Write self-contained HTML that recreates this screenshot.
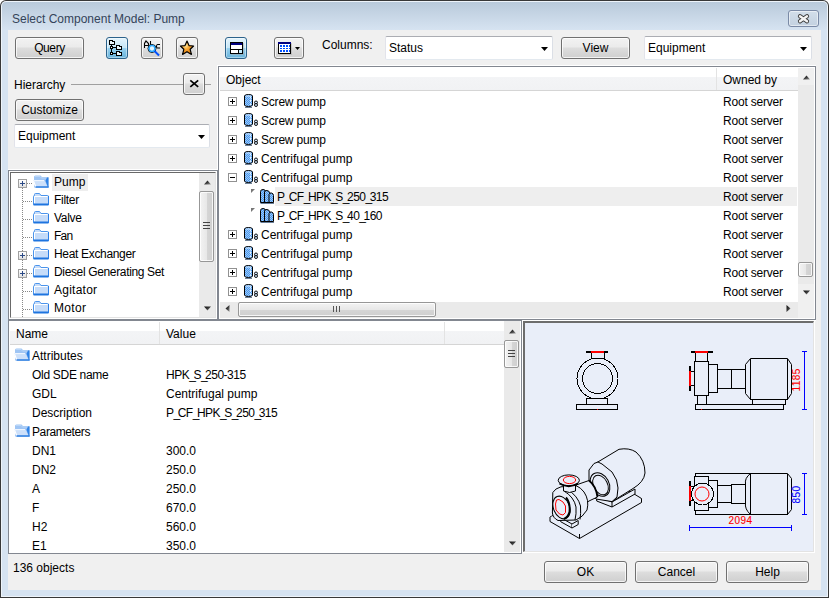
<!DOCTYPE html>
<html><head><meta charset="utf-8">
<style>
*{margin:0;padding:0;box-sizing:border-box}
html,body{width:829px;height:598px;overflow:hidden;background:#fff}
body{position:relative;font-family:"Liberation Sans",sans-serif;font-size:12px;color:#000}
.a{position:absolute}
svg.a{overflow:visible}
.t{position:absolute;white-space:nowrap;line-height:17px}
#win{left:0;top:0;width:829px;height:598px;background:#383838;border-radius:6px 6px 0 0}
#win2{left:1px;top:1px;width:827px;height:596px;background:#eef4fa;border-radius:5px 5px 0 0}
#win3{left:2px;top:2px;width:825px;height:594px;background:linear-gradient(#b9cadb 0px,#d6e3f1 28px,#d6e3f1 100%);border-radius:4px 4px 0 0}
#client{left:8px;top:30px;width:813px;height:560px;background:#f0f0f0}
.btn{position:absolute;border:1px solid #707070;border-radius:3px;background:linear-gradient(#f2f2f2 0%,#ebebeb 45%,#dddddd 50%,#cfcfcf 100%);box-shadow:inset 0 0 0 1px rgba(255,255,255,.75);text-align:center;line-height:21px}
.bsel{position:absolute;border:1px solid #2c628b;border-radius:3px;background:linear-gradient(#e5f4fc 0%,#c4e5f6 50%,#98d1ef 50%,#68b3db 100%);box-shadow:inset 0 0 0 1px rgba(255,255,255,.4)}
.combo{position:absolute;background:#fff;border:1px solid;border-color:#abadb3 #dbdfe6 #e3e9ef #e2e3ea;border-radius:2px}
.arr{position:absolute;width:0;height:0;border-left:4px solid transparent;border-right:4px solid transparent;border-top:4px solid #000}
.thumbv{border:1px solid #979797;border-radius:2px;background:linear-gradient(90deg,#f3f3f3 0%,#e8e8e8 50%,#d6d6d6 51%,#cfcfcf 100%);box-shadow:inset 0 0 0 1px rgba(255,255,255,.8)}
.thumbh{border:1px solid #979797;border-radius:2px;background:linear-gradient(#f3f3f3 0%,#e8e8e8 50%,#d6d6d6 51%,#cfcfcf 100%);box-shadow:inset 0 0 0 1px rgba(255,255,255,.8)}
</style></head><body>
<svg width="0" height="0" style="position:absolute"><defs><linearGradient id="ag" x1="0" y1="0" x2="1" y2="1"><stop offset="0" stop-color="#0a0a0a"/><stop offset="0.5" stop-color="#3a3a3a"/><stop offset="1" stop-color="#9a9a9a"/></linearGradient><pattern id="dith" width="2" height="2" patternUnits="userSpaceOnUse"><rect width="2" height="2" fill="#4a98ee"/><rect width="1" height="1" fill="#9cc8f7"/><rect x="1" y="1" width="1" height="1" fill="#9cc8f7"/></pattern></defs></svg>
<div id="win" class="a"></div>
<div id="win2" class="a"></div>
<div id="win3" class="a"></div>
<div class="t" style="left:12px;top:11px;color:#34445a">Select Component Model: Pump</div>
<div class="a" style="left:788px;top:10px;width:31px;height:17px;border:1px solid #7a8aa6;border-radius:3px;background:linear-gradient(#d2deea,#c3d1e0);box-shadow:inset 0 0 0 1px rgba(255,255,255,.5)"></div>
<svg class="a" style="left:797px;top:14px" width="14" height="12"><path d="M3 2.2L10 7.3M10 2.2L3 7.3" stroke="#3a3a3a" stroke-width="4.2" stroke-linecap="round"/><path d="M3 2.2L10 7.3M10 2.2L3 7.3" stroke="#f4f4f4" stroke-width="2.4" stroke-linecap="round"/></svg>
<div id="client" class="a"></div>

<!-- toolbar -->
<div class="btn" style="left:15px;top:37px;width:69px;height:22px;letter-spacing:-0.4px">Query</div>
<div class="bsel" style="left:106px;top:37px;width:22px;height:22px"></div>
<svg class="a" style="left:106px;top:37px" width="22" height="22" viewBox="0 0 22 22" shape-rendering="crispEdges">
<path d="M3.5 3.5H6L7 4.5H8.5V7.5H3.5Z" fill="#eaf6fd" stroke="#000"/>
<path d="M10.5 8.5H13L14 9.5H15.5V12.5H10.5Z" fill="#eaf6fd" stroke="#000"/>
<path d="M10.5 14.5H13L14 15.5H15.5V18.5H10.5Z" fill="#eaf6fd" stroke="#000"/>
<path d="M5.5 8V16M7 10.5H10.5M7 16.5H10.5" stroke="#000"/>
<rect x="4.5" y="9.5" width="2" height="2" fill="#fff" stroke="#000"/>
<rect x="4.5" y="15.5" width="2" height="2" fill="#fff" stroke="#000"/>
</svg>
<div class="btn" style="left:141px;top:37px;width:22px;height:22px"></div>
<svg class="a" style="left:141px;top:37px" width="22" height="22" viewBox="0 0 22 22">
<path d="M3.5 11V6.5L5 4L7.5 6.5V11M3.5 8.5H7.5M9.5 4V11.5M19 7.5H16.5Q15.5 7.5 15.5 9.5Q15.5 11 16.5 11H19" fill="none" stroke="#000" stroke-width="1.1"/>
<circle cx="11" cy="11.5" r="4" fill="#e6f6ff" stroke="#000" stroke-width="1"/>
<circle cx="11" cy="11.5" r="2.9" fill="none" stroke="#2aa8ff" stroke-width="1.5"/>
<path d="M13.5 14L18 18.5" stroke="#0050ff" stroke-width="2"/>
</svg>
<div class="btn" style="left:176px;top:37px;width:22px;height:22px"></div>
<svg class="a" style="left:176px;top:37px" width="22" height="22" viewBox="0 0 22 22">
<defs><radialGradient id="sg" cx="0.4" cy="0.35" r="0.6"><stop offset="0" stop-color="#ffe9a0"/><stop offset="0.45" stop-color="#f7a531"/><stop offset="1" stop-color="#e07f10"/></radialGradient></defs>
<path d="M11 4L13 8.6L17.6 9L14.2 12.3L15.4 17.4L11 14.7L6.6 17.4L7.8 12.3L4.4 9L9 8.6Z" fill="url(#sg)" stroke="#000" stroke-width="1.2" stroke-linejoin="round"/>
</svg>
<div class="bsel" style="left:225px;top:37px;width:22px;height:22px"></div>
<svg class="a" style="left:225px;top:37px" width="22" height="22" viewBox="0 0 22 22" shape-rendering="crispEdges">
<rect x="6" y="6" width="13" height="12" fill="#a6a6a6" opacity=".5"/>
<rect x="5" y="5" width="13" height="12" fill="#000"/>
<rect x="6" y="6" width="11" height="2" fill="#000080"/>
<rect x="6" y="8" width="11" height="4" fill="#fff"/>
<rect x="6" y="13" width="7" height="3" fill="#fff"/>
<rect x="14" y="13" width="3" height="3" fill="#c4ecff"/>
</svg>
<div class="btn" style="left:274px;top:37px;width:30px;height:22px"></div>
<svg class="a" style="left:274px;top:37px" width="30" height="22" viewBox="0 0 30 22" shape-rendering="crispEdges">
<rect x="5" y="6" width="13" height="12" fill="#a6a6a6" opacity=".5"/>
<rect x="4" y="5" width="13" height="12" fill="#000"/>
<rect x="4" y="5" width="13" height="2" fill="#000080"/>
<rect x="5" y="7" width="11" height="9" fill="#fff"/>
<g fill="#0050ff">
<rect x="6" y="8" width="2" height="2"/><rect x="9" y="8" width="2" height="2"/><rect x="12" y="8" width="2" height="2"/><rect x="15" y="8" width="1" height="2"/>
<rect x="6" y="11" width="2" height="1"/><rect x="9" y="11" width="2" height="1"/><rect x="12" y="11" width="2" height="1"/><rect x="15" y="11" width="1" height="1"/>
<rect x="6" y="13" width="2" height="2"/><rect x="9" y="13" width="2" height="2"/><rect x="12" y="13" width="2" height="2"/><rect x="15" y="13" width="1" height="2"/>
</g>
<path d="M21 10H26L23.5 13Z" fill="#000" shape-rendering="auto"/>
</svg>
<div class="btn" style="left:561px;top:37px;width:69px;height:22px">View</div>
<div class="t" style="left:322px;top:37px">Columns:</div>
<div class="combo" style="left:385px;top:36px;width:168px;height:24px"><div class="t" style="left:3px;top:3px">Status</div><svg class="a" style="left:155px;top:10px" width="7" height="4"><path d="M0 0H7L3.5 4Z" fill="#000"/></svg></div>
<div class="combo" style="left:644px;top:36px;width:168px;height:24px"><div class="t" style="left:3px;top:3px">Equipment</div><svg class="a" style="left:155px;top:10px" width="7" height="4"><path d="M0 0H7L3.5 4Z" fill="#000"/></svg></div>
<div class="t" style="left:14px;top:77px">Hierarchy</div>
<div class="a" style="left:71px;top:84px;width:112px;height:1px;background:#a0a0a0"></div>
<div class="a" style="left:205px;top:84px;width:6px;height:1px;background:#a0a0a0"></div>
<div class="btn" style="left:183px;top:73px;width:22px;height:22px"></div>
<svg class="a" style="left:188px;top:78px" width="12" height="12"><path d="M2.3 2.3L10.2 8.9M10.2 2.3L2.3 8.9" stroke="#000" stroke-width="1.7"/></svg>
<div class="btn" style="left:15px;top:99px;width:69px;height:22px">Customize</div>
<div class="combo" style="left:14px;top:124px;width:196px;height:24px"><div class="t" style="left:3px;top:3px">Equipment</div><svg class="a" style="left:183px;top:10px" width="7" height="4"><path d="M0 0H7L3.5 4Z" fill="#000"/></svg></div>
<div class="a" style="left:217px;top:65px;width:599px;height:256px;background:#fff"></div>
<div class="a" style="left:218px;top:66px;width:598px;height:254px;border:1px solid #828790;background:#fff"></div>
<div class="a" style="left:220px;top:68px;width:578px;height:23px;background:linear-gradient(#fff 0,#fff 9px,#f3f4f6 9px,#f1f2f4 100%);border-bottom:1px solid #d5d5d5"></div>
<div class="a" style="left:716px;top:68px;width:1px;height:22px;background:#e3e3e3"></div>
<div class="t" style="left:226px;top:72px">Object</div>
<div class="t" style="left:723px;top:72px">Owned by</div>
<div class="a" style="left:220px;top:92px;width:578px;height:209px;overflow:hidden">
<div class="a" style="left:8px;top:5px;width:9px;height:9px;border:1px solid #919191;background:#fff"></div>
<div class="a" style="left:10px;top:9px;width:5px;height:1px;background:#000"></div>
<div class="a" style="left:12px;top:7px;width:1px;height:5px;background:#000"></div>
<svg class="a" style="left:24px;top:1px" width="16" height="16" viewBox="0 0 16 16">
<path d="M0.5 3 Q0.5 1.5 4.5 1.5 Q8.5 1.5 8.5 3 V12 Q8.5 13.5 4.5 13.5 Q0.5 13.5 0.5 12 Z" fill="url(#dith)" stroke="#000" stroke-width="1"/>
<path d="M6.5 3.5V12" stroke="#e8f4ff" stroke-width="1" stroke-dasharray="2 1.5"/><path d="M2 3H7" stroke="#cfe6ff" stroke-width="1"/>
<path d="M1 14.5H8" stroke="#6d7f95" stroke-width="1"/>
<circle cx="12" cy="9.5" r="1.5" fill="#cfe4fb" stroke="#000" stroke-width="0.9"/>
<circle cx="12" cy="12" r="1.5" fill="#cfe4fb" stroke="#000" stroke-width="0.9"/>
</svg>
<div class="t" style="left:41px;top:2px"><span style="letter-spacing:-0.2px">Screw pump</span></div>
<div class="t" style="left:503px;top:2px"><span style="letter-spacing:-0.2px">Root server</span></div>
<div class="a" style="left:8px;top:24px;width:9px;height:9px;border:1px solid #919191;background:#fff"></div>
<div class="a" style="left:10px;top:28px;width:5px;height:1px;background:#000"></div>
<div class="a" style="left:12px;top:26px;width:1px;height:5px;background:#000"></div>
<svg class="a" style="left:24px;top:20px" width="16" height="16" viewBox="0 0 16 16">
<path d="M0.5 3 Q0.5 1.5 4.5 1.5 Q8.5 1.5 8.5 3 V12 Q8.5 13.5 4.5 13.5 Q0.5 13.5 0.5 12 Z" fill="url(#dith)" stroke="#000" stroke-width="1"/>
<path d="M6.5 3.5V12" stroke="#e8f4ff" stroke-width="1" stroke-dasharray="2 1.5"/><path d="M2 3H7" stroke="#cfe6ff" stroke-width="1"/>
<path d="M1 14.5H8" stroke="#6d7f95" stroke-width="1"/>
<circle cx="12" cy="9.5" r="1.5" fill="#cfe4fb" stroke="#000" stroke-width="0.9"/>
<circle cx="12" cy="12" r="1.5" fill="#cfe4fb" stroke="#000" stroke-width="0.9"/>
</svg>
<div class="t" style="left:41px;top:21px"><span style="letter-spacing:-0.2px">Screw pump</span></div>
<div class="t" style="left:503px;top:21px"><span style="letter-spacing:-0.2px">Root server</span></div>
<div class="a" style="left:8px;top:43px;width:9px;height:9px;border:1px solid #919191;background:#fff"></div>
<div class="a" style="left:10px;top:47px;width:5px;height:1px;background:#000"></div>
<div class="a" style="left:12px;top:45px;width:1px;height:5px;background:#000"></div>
<svg class="a" style="left:24px;top:39px" width="16" height="16" viewBox="0 0 16 16">
<path d="M0.5 3 Q0.5 1.5 4.5 1.5 Q8.5 1.5 8.5 3 V12 Q8.5 13.5 4.5 13.5 Q0.5 13.5 0.5 12 Z" fill="url(#dith)" stroke="#000" stroke-width="1"/>
<path d="M6.5 3.5V12" stroke="#e8f4ff" stroke-width="1" stroke-dasharray="2 1.5"/><path d="M2 3H7" stroke="#cfe6ff" stroke-width="1"/>
<path d="M1 14.5H8" stroke="#6d7f95" stroke-width="1"/>
<circle cx="12" cy="9.5" r="1.5" fill="#cfe4fb" stroke="#000" stroke-width="0.9"/>
<circle cx="12" cy="12" r="1.5" fill="#cfe4fb" stroke="#000" stroke-width="0.9"/>
</svg>
<div class="t" style="left:41px;top:40px"><span style="letter-spacing:-0.2px">Screw pump</span></div>
<div class="t" style="left:503px;top:40px"><span style="letter-spacing:-0.2px">Root server</span></div>
<div class="a" style="left:8px;top:62px;width:9px;height:9px;border:1px solid #919191;background:#fff"></div>
<div class="a" style="left:10px;top:66px;width:5px;height:1px;background:#000"></div>
<div class="a" style="left:12px;top:64px;width:1px;height:5px;background:#000"></div>
<svg class="a" style="left:24px;top:58px" width="16" height="16" viewBox="0 0 16 16">
<path d="M0.5 3 Q0.5 1.5 4.5 1.5 Q8.5 1.5 8.5 3 V12 Q8.5 13.5 4.5 13.5 Q0.5 13.5 0.5 12 Z" fill="url(#dith)" stroke="#000" stroke-width="1"/>
<path d="M6.5 3.5V12" stroke="#e8f4ff" stroke-width="1" stroke-dasharray="2 1.5"/><path d="M2 3H7" stroke="#cfe6ff" stroke-width="1"/>
<path d="M1 14.5H8" stroke="#6d7f95" stroke-width="1"/>
<circle cx="12" cy="9.5" r="1.5" fill="#cfe4fb" stroke="#000" stroke-width="0.9"/>
<circle cx="12" cy="12" r="1.5" fill="#cfe4fb" stroke="#000" stroke-width="0.9"/>
</svg>
<div class="t" style="left:41px;top:59px">Centrifugal pump</div>
<div class="t" style="left:503px;top:59px"><span style="letter-spacing:-0.2px">Root server</span></div>
<div class="a" style="left:8px;top:81px;width:9px;height:9px;border:1px solid #919191;background:#fff"></div>
<div class="a" style="left:10px;top:85px;width:5px;height:1px;background:#000"></div>
<svg class="a" style="left:24px;top:77px" width="16" height="16" viewBox="0 0 16 16">
<path d="M0.5 3 Q0.5 1.5 4.5 1.5 Q8.5 1.5 8.5 3 V12 Q8.5 13.5 4.5 13.5 Q0.5 13.5 0.5 12 Z" fill="url(#dith)" stroke="#000" stroke-width="1"/>
<path d="M6.5 3.5V12" stroke="#e8f4ff" stroke-width="1" stroke-dasharray="2 1.5"/><path d="M2 3H7" stroke="#cfe6ff" stroke-width="1"/>
<path d="M1 14.5H8" stroke="#6d7f95" stroke-width="1"/>
<circle cx="12" cy="9.5" r="1.5" fill="#cfe4fb" stroke="#000" stroke-width="0.9"/>
<circle cx="12" cy="12" r="1.5" fill="#cfe4fb" stroke="#000" stroke-width="0.9"/>
</svg>
<div class="t" style="left:41px;top:78px">Centrifugal pump</div>
<div class="t" style="left:503px;top:78px"><span style="letter-spacing:-0.2px">Root server</span></div>
<div class="a" style="left:55px;top:95px;width:522px;height:19px;background:#eeeeee"></div>
<svg class="a" style="left:31px;top:97px" width="5" height="5"><path d="M0 0H4L0 4Z" fill="#777"/></svg>
<svg class="a" style="left:40px;top:97px" width="16" height="16" viewBox="0 0 16 16">
<path d="M0.5 2.5 Q0.5 0.5 3 0.5 Q5.5 0.5 5.5 2.5 V13.5 H0.5 Z" fill="url(#dith)" stroke="#000"/>
<path d="M4.5 3 Q4.5 1.5 7 1.5 Q9.5 2 10 4 V13.5 H4.5 Z" fill="url(#dith)" stroke="#000"/>
<path d="M9 5.5 Q9 4 11.5 4 Q13.5 4.5 13.5 6.5 V13.5 H9 Z" fill="url(#dith)" stroke="#000"/>
<path d="M0.5 14.5 H14" stroke="#6a7f99"/>
</svg>
<div class="t" style="left:57px;top:97px"><span style="letter-spacing:-0.5px">P<span style="letter-spacing:-2.5px">_</span>CF<span style="letter-spacing:-2.5px">_</span>HPK<span style="letter-spacing:-2.5px">_</span>S<span style="letter-spacing:-2.5px">_</span>250<span style="letter-spacing:-2.5px">_</span>315</span></div>
<div class="t" style="left:503px;top:97px"><span style="letter-spacing:-0.2px">Root server</span></div>
<div class="a" style="left:55px;top:114px;width:522px;height:19px;background:transparent"></div>
<svg class="a" style="left:31px;top:116px" width="5" height="5"><path d="M0 0H4L0 4Z" fill="#777"/></svg>
<svg class="a" style="left:40px;top:116px" width="16" height="16" viewBox="0 0 16 16">
<path d="M0.5 2.5 Q0.5 0.5 3 0.5 Q5.5 0.5 5.5 2.5 V13.5 H0.5 Z" fill="url(#dith)" stroke="#000"/>
<path d="M4.5 3 Q4.5 1.5 7 1.5 Q9.5 2 10 4 V13.5 H4.5 Z" fill="url(#dith)" stroke="#000"/>
<path d="M9 5.5 Q9 4 11.5 4 Q13.5 4.5 13.5 6.5 V13.5 H9 Z" fill="url(#dith)" stroke="#000"/>
<path d="M0.5 14.5 H14" stroke="#6a7f99"/>
</svg>
<div class="t" style="left:57px;top:116px"><span style="letter-spacing:-0.5px">P<span style="letter-spacing:-2.5px">_</span>CF<span style="letter-spacing:-2.5px">_</span>HPK<span style="letter-spacing:-2.5px">_</span>S<span style="letter-spacing:-2.5px">_</span>40<span style="letter-spacing:-2.5px">_</span>160</span></div>
<div class="t" style="left:503px;top:116px"><span style="letter-spacing:-0.2px">Root server</span></div>
<div class="a" style="left:8px;top:138px;width:9px;height:9px;border:1px solid #919191;background:#fff"></div>
<div class="a" style="left:10px;top:142px;width:5px;height:1px;background:#000"></div>
<div class="a" style="left:12px;top:140px;width:1px;height:5px;background:#000"></div>
<svg class="a" style="left:24px;top:134px" width="16" height="16" viewBox="0 0 16 16">
<path d="M0.5 3 Q0.5 1.5 4.5 1.5 Q8.5 1.5 8.5 3 V12 Q8.5 13.5 4.5 13.5 Q0.5 13.5 0.5 12 Z" fill="url(#dith)" stroke="#000" stroke-width="1"/>
<path d="M6.5 3.5V12" stroke="#e8f4ff" stroke-width="1" stroke-dasharray="2 1.5"/><path d="M2 3H7" stroke="#cfe6ff" stroke-width="1"/>
<path d="M1 14.5H8" stroke="#6d7f95" stroke-width="1"/>
<circle cx="12" cy="9.5" r="1.5" fill="#cfe4fb" stroke="#000" stroke-width="0.9"/>
<circle cx="12" cy="12" r="1.5" fill="#cfe4fb" stroke="#000" stroke-width="0.9"/>
</svg>
<div class="t" style="left:41px;top:135px">Centrifugal pump</div>
<div class="t" style="left:503px;top:135px"><span style="letter-spacing:-0.2px">Root server</span></div>
<div class="a" style="left:8px;top:157px;width:9px;height:9px;border:1px solid #919191;background:#fff"></div>
<div class="a" style="left:10px;top:161px;width:5px;height:1px;background:#000"></div>
<div class="a" style="left:12px;top:159px;width:1px;height:5px;background:#000"></div>
<svg class="a" style="left:24px;top:153px" width="16" height="16" viewBox="0 0 16 16">
<path d="M0.5 3 Q0.5 1.5 4.5 1.5 Q8.5 1.5 8.5 3 V12 Q8.5 13.5 4.5 13.5 Q0.5 13.5 0.5 12 Z" fill="url(#dith)" stroke="#000" stroke-width="1"/>
<path d="M6.5 3.5V12" stroke="#e8f4ff" stroke-width="1" stroke-dasharray="2 1.5"/><path d="M2 3H7" stroke="#cfe6ff" stroke-width="1"/>
<path d="M1 14.5H8" stroke="#6d7f95" stroke-width="1"/>
<circle cx="12" cy="9.5" r="1.5" fill="#cfe4fb" stroke="#000" stroke-width="0.9"/>
<circle cx="12" cy="12" r="1.5" fill="#cfe4fb" stroke="#000" stroke-width="0.9"/>
</svg>
<div class="t" style="left:41px;top:154px">Centrifugal pump</div>
<div class="t" style="left:503px;top:154px"><span style="letter-spacing:-0.2px">Root server</span></div>
<div class="a" style="left:8px;top:176px;width:9px;height:9px;border:1px solid #919191;background:#fff"></div>
<div class="a" style="left:10px;top:180px;width:5px;height:1px;background:#000"></div>
<div class="a" style="left:12px;top:178px;width:1px;height:5px;background:#000"></div>
<svg class="a" style="left:24px;top:172px" width="16" height="16" viewBox="0 0 16 16">
<path d="M0.5 3 Q0.5 1.5 4.5 1.5 Q8.5 1.5 8.5 3 V12 Q8.5 13.5 4.5 13.5 Q0.5 13.5 0.5 12 Z" fill="url(#dith)" stroke="#000" stroke-width="1"/>
<path d="M6.5 3.5V12" stroke="#e8f4ff" stroke-width="1" stroke-dasharray="2 1.5"/><path d="M2 3H7" stroke="#cfe6ff" stroke-width="1"/>
<path d="M1 14.5H8" stroke="#6d7f95" stroke-width="1"/>
<circle cx="12" cy="9.5" r="1.5" fill="#cfe4fb" stroke="#000" stroke-width="0.9"/>
<circle cx="12" cy="12" r="1.5" fill="#cfe4fb" stroke="#000" stroke-width="0.9"/>
</svg>
<div class="t" style="left:41px;top:173px">Centrifugal pump</div>
<div class="t" style="left:503px;top:173px"><span style="letter-spacing:-0.2px">Root server</span></div>
<div class="a" style="left:8px;top:195px;width:9px;height:9px;border:1px solid #919191;background:#fff"></div>
<div class="a" style="left:10px;top:199px;width:5px;height:1px;background:#000"></div>
<div class="a" style="left:12px;top:197px;width:1px;height:5px;background:#000"></div>
<svg class="a" style="left:24px;top:191px" width="16" height="16" viewBox="0 0 16 16">
<path d="M0.5 3 Q0.5 1.5 4.5 1.5 Q8.5 1.5 8.5 3 V12 Q8.5 13.5 4.5 13.5 Q0.5 13.5 0.5 12 Z" fill="url(#dith)" stroke="#000" stroke-width="1"/>
<path d="M6.5 3.5V12" stroke="#e8f4ff" stroke-width="1" stroke-dasharray="2 1.5"/><path d="M2 3H7" stroke="#cfe6ff" stroke-width="1"/>
<path d="M1 14.5H8" stroke="#6d7f95" stroke-width="1"/>
<circle cx="12" cy="9.5" r="1.5" fill="#cfe4fb" stroke="#000" stroke-width="0.9"/>
<circle cx="12" cy="12" r="1.5" fill="#cfe4fb" stroke="#000" stroke-width="0.9"/>
</svg>
<div class="t" style="left:41px;top:192px">Centrifugal pump</div>
<div class="t" style="left:503px;top:192px"><span style="letter-spacing:-0.2px">Root server</span></div>
</div>
<div class="a" style="left:798px;top:68px;width:16px;height:233px;background:#eaeaea"></div>
<div class="a" style="left:798px;top:68px;width:16px;height:17px;background:#f0f0f0"></div>
<div class="a" style="left:798px;top:284px;width:16px;height:17px;background:#f0f0f0"></div>
<svg class="a" style="left:803px;top:75px" width="8" height="5"><path d="M0 4.5L3.5 0.5L7 4.5Z" fill="url(#ag)"/></svg>
<svg class="a" style="left:803px;top:290px" width="8" height="5"><path d="M0 0.5L3.5 4.5L7 0.5Z" fill="url(#ag)"/></svg>
<div class="a thumbv" style="left:798px;top:262px;width:15px;height:15px"></div>
<div class="a" style="left:220px;top:302px;width:578px;height:16px;background:#eaeaea"></div>
<svg class="a" style="left:225px;top:305px" width="5" height="8"><path d="M4.5 0L0.5 3.5L4.5 7Z" fill="url(#ag)"/></svg>
<svg class="a" style="left:786px;top:305px" width="5" height="8"><path d="M0.5 0L4.5 3.5L0.5 7Z" fill="url(#ag)"/></svg>
<div class="a thumbh" style="left:238px;top:302px;width:198px;height:15px"></div>
<div class="a" style="left:333px;top:306px;width:1px;height:6px;background:#555"></div><div class="a" style="left:336px;top:306px;width:1px;height:6px;background:#555"></div><div class="a" style="left:339px;top:306px;width:1px;height:6px;background:#555"></div>
<div class="a" style="left:798px;top:301px;width:16px;height:17px;background:#f0f0f0"></div>
<div class="a" style="left:8px;top:169px;width:210px;height:151px;background:#fff"></div>
<div class="a" style="left:8px;top:170px;width:210px;height:150px;border:1px solid #828790;background:#fff"></div>
<div class="a" style="left:10px;top:172px;width:206px;height:146px;border-top:1px solid #696969;border-left:1px solid #696969;border-right:1px solid #e3e3e3;border-bottom:1px solid #e3e3e3"></div>
<div class="a" style="left:11px;top:173px;width:188px;height:144px;overflow:hidden">
<div class="a" style="left:11px;top:15px;width:1px;height:130px;background:repeating-linear-gradient(#888 0 1px,transparent 1px 2px)"></div>
<div class="a" style="left:12px;top:10px;width:10px;height:1px;background:repeating-linear-gradient(90deg,#888 0 1px,transparent 1px 2px)"></div>
<div class="a" style="left:7px;top:6px;width:9px;height:9px;border:1px solid #a0a0a0;background:linear-gradient(#fff,#e0e0e0)"></div>
<div class="a" style="left:9px;top:10px;width:5px;height:1px;background:#2b4a86"></div><div class="a" style="left:11px;top:8px;width:1px;height:5px;background:#2b4a86"></div>
<div class="a" style="left:41px;top:1px;width:36px;height:17px;background:#eeeeee"></div>
<svg class="a" style="left:22px;top:2px" width="16" height="13" viewBox="0 0 16 13">
<path d="M1 2Q1 0.5 2.5 0.5H7.5L9 2H15.5V12.5H1Z" fill="#9fc5f4"/>
<path d="M2 1.5H7L8.5 3H14.5" stroke="#b9d6f8" fill="none"/>
<path d="M0 5.5H11.5L15 12.5H2.5Z" fill="#cde0fa"/>
<path d="M0.5 6L2.8 12" stroke="#fff" stroke-width="1.2"/>
<path d="M0.5 5.6H11" stroke="#f4f9ff" stroke-width="1"/>
<path d="M14 2.5H15.5V12.5H15L12.5 5.8Z" fill="#2f82e6"/>
<path d="M2.5 12H15.5" stroke="#1e74df" stroke-width="1.4"/>
</svg>
<div class="t" style="left:43px;top:1px">Pump</div>
<div class="a" style="left:12px;top:28px;width:10px;height:1px;background:repeating-linear-gradient(90deg,#888 0 1px,transparent 1px 2px)"></div>
<svg class="a" style="left:22px;top:20px" width="16" height="13" viewBox="0 0 16 13">
<path d="M1.5 2.5V1.5Q1.5 0.5 2.5 0.5H6.5L8 2.5H14.5Q15.5 2.5 15.5 3.5V11.5H0.5V3.5Q0.5 2.5 1.5 2.5Z" fill="#c6dcf9" stroke="#4b94ec"/>
<path d="M1.5 3.5H14.5M1.5 3.5V10.5" stroke="#fff" stroke-width="1"/>
<path d="M0.5 11.5H15.5" stroke="#1e74df" stroke-width="2"/>
<path d="M15.5 3V12" stroke="#2c7fe6" stroke-width="1"/>
</svg>
<div class="t" style="left:43px;top:19px"><span style="letter-spacing:-0.3px">Filter</span></div>
<div class="a" style="left:12px;top:46px;width:10px;height:1px;background:repeating-linear-gradient(90deg,#888 0 1px,transparent 1px 2px)"></div>
<svg class="a" style="left:22px;top:38px" width="16" height="13" viewBox="0 0 16 13">
<path d="M1.5 2.5V1.5Q1.5 0.5 2.5 0.5H6.5L8 2.5H14.5Q15.5 2.5 15.5 3.5V11.5H0.5V3.5Q0.5 2.5 1.5 2.5Z" fill="#c6dcf9" stroke="#4b94ec"/>
<path d="M1.5 3.5H14.5M1.5 3.5V10.5" stroke="#fff" stroke-width="1"/>
<path d="M0.5 11.5H15.5" stroke="#1e74df" stroke-width="2"/>
<path d="M15.5 3V12" stroke="#2c7fe6" stroke-width="1"/>
</svg>
<div class="t" style="left:43px;top:37px"><span style="letter-spacing:-0.3px">Valve</span></div>
<div class="a" style="left:12px;top:64px;width:10px;height:1px;background:repeating-linear-gradient(90deg,#888 0 1px,transparent 1px 2px)"></div>
<svg class="a" style="left:22px;top:56px" width="16" height="13" viewBox="0 0 16 13">
<path d="M1.5 2.5V1.5Q1.5 0.5 2.5 0.5H6.5L8 2.5H14.5Q15.5 2.5 15.5 3.5V11.5H0.5V3.5Q0.5 2.5 1.5 2.5Z" fill="#c6dcf9" stroke="#4b94ec"/>
<path d="M1.5 3.5H14.5M1.5 3.5V10.5" stroke="#fff" stroke-width="1"/>
<path d="M0.5 11.5H15.5" stroke="#1e74df" stroke-width="2"/>
<path d="M15.5 3V12" stroke="#2c7fe6" stroke-width="1"/>
</svg>
<div class="t" style="left:43px;top:55px"><span style="letter-spacing:-0.8px">Fan</span></div>
<div class="a" style="left:12px;top:82px;width:10px;height:1px;background:repeating-linear-gradient(90deg,#888 0 1px,transparent 1px 2px)"></div>
<div class="a" style="left:7px;top:78px;width:9px;height:9px;border:1px solid #a0a0a0;background:linear-gradient(#fff,#e0e0e0)"></div>
<div class="a" style="left:9px;top:82px;width:5px;height:1px;background:#2b4a86"></div><div class="a" style="left:11px;top:80px;width:1px;height:5px;background:#2b4a86"></div>
<svg class="a" style="left:22px;top:74px" width="16" height="13" viewBox="0 0 16 13">
<path d="M1.5 2.5V1.5Q1.5 0.5 2.5 0.5H6.5L8 2.5H14.5Q15.5 2.5 15.5 3.5V11.5H0.5V3.5Q0.5 2.5 1.5 2.5Z" fill="#c6dcf9" stroke="#4b94ec"/>
<path d="M1.5 3.5H14.5M1.5 3.5V10.5" stroke="#fff" stroke-width="1"/>
<path d="M0.5 11.5H15.5" stroke="#1e74df" stroke-width="2"/>
<path d="M15.5 3V12" stroke="#2c7fe6" stroke-width="1"/>
</svg>
<div class="t" style="left:43px;top:73px"><span style="letter-spacing:-0.33px">Heat Exchanger</span></div>
<div class="a" style="left:12px;top:100px;width:10px;height:1px;background:repeating-linear-gradient(90deg,#888 0 1px,transparent 1px 2px)"></div>
<div class="a" style="left:7px;top:96px;width:9px;height:9px;border:1px solid #a0a0a0;background:linear-gradient(#fff,#e0e0e0)"></div>
<div class="a" style="left:9px;top:100px;width:5px;height:1px;background:#2b4a86"></div><div class="a" style="left:11px;top:98px;width:1px;height:5px;background:#2b4a86"></div>
<svg class="a" style="left:22px;top:92px" width="16" height="13" viewBox="0 0 16 13">
<path d="M1.5 2.5V1.5Q1.5 0.5 2.5 0.5H6.5L8 2.5H14.5Q15.5 2.5 15.5 3.5V11.5H0.5V3.5Q0.5 2.5 1.5 2.5Z" fill="#c6dcf9" stroke="#4b94ec"/>
<path d="M1.5 3.5H14.5M1.5 3.5V10.5" stroke="#fff" stroke-width="1"/>
<path d="M0.5 11.5H15.5" stroke="#1e74df" stroke-width="2"/>
<path d="M15.5 3V12" stroke="#2c7fe6" stroke-width="1"/>
</svg>
<div class="t" style="left:43px;top:91px"><span style="letter-spacing:-0.35px">Diesel Generating Set</span></div>
<div class="a" style="left:12px;top:118px;width:10px;height:1px;background:repeating-linear-gradient(90deg,#888 0 1px,transparent 1px 2px)"></div>
<svg class="a" style="left:22px;top:110px" width="16" height="13" viewBox="0 0 16 13">
<path d="M1.5 2.5V1.5Q1.5 0.5 2.5 0.5H6.5L8 2.5H14.5Q15.5 2.5 15.5 3.5V11.5H0.5V3.5Q0.5 2.5 1.5 2.5Z" fill="#c6dcf9" stroke="#4b94ec"/>
<path d="M1.5 3.5H14.5M1.5 3.5V10.5" stroke="#fff" stroke-width="1"/>
<path d="M0.5 11.5H15.5" stroke="#1e74df" stroke-width="2"/>
<path d="M15.5 3V12" stroke="#2c7fe6" stroke-width="1"/>
</svg>
<div class="t" style="left:43px;top:109px"><span style="letter-spacing:0.25px">Agitator</span></div>
<div class="a" style="left:12px;top:136px;width:10px;height:1px;background:repeating-linear-gradient(90deg,#888 0 1px,transparent 1px 2px)"></div>
<svg class="a" style="left:22px;top:128px" width="16" height="13" viewBox="0 0 16 13">
<path d="M1.5 2.5V1.5Q1.5 0.5 2.5 0.5H6.5L8 2.5H14.5Q15.5 2.5 15.5 3.5V11.5H0.5V3.5Q0.5 2.5 1.5 2.5Z" fill="#c6dcf9" stroke="#4b94ec"/>
<path d="M1.5 3.5H14.5M1.5 3.5V10.5" stroke="#fff" stroke-width="1"/>
<path d="M0.5 11.5H15.5" stroke="#1e74df" stroke-width="2"/>
<path d="M15.5 3V12" stroke="#2c7fe6" stroke-width="1"/>
</svg>
<div class="t" style="left:43px;top:127px"><span style="letter-spacing:0.3px">Motor</span></div>
</div>
<div class="a" style="left:199px;top:173px;width:16px;height:144px;background:#eaeaea"></div>
<svg class="a" style="left:204px;top:180px" width="8" height="5"><path d="M0 4.5L3.5 0.5L7 4.5Z" fill="url(#ag)"/></svg>
<svg class="a" style="left:204px;top:306px" width="8" height="5"><path d="M0 0.5L3.5 4.5L7 0.5Z" fill="url(#ag)"/></svg>
<div class="a thumbv" style="left:199px;top:191px;width:15px;height:71px"></div>
<div class="a" style="left:203px;top:222px;width:7px;height:1px;background:#444"></div>
<div class="a" style="left:203px;top:225px;width:7px;height:1px;background:#444"></div>
<div class="a" style="left:203px;top:228px;width:7px;height:1px;background:#444"></div>
<div class="a" style="left:8px;top:320px;width:514px;height:234px;border:1px solid #828790;background:#fff"></div>
<div class="a" style="left:10px;top:321px;width:494px;height:24px;background:linear-gradient(#fff 0,#fff 10px,#f3f4f6 10px,#f1f2f4 100%);border-bottom:1px solid #d5d5d5"></div>
<div class="a" style="left:159px;top:322px;width:1px;height:22px;background:#e3e3e3"></div>
<div class="a" style="left:444px;top:322px;width:1px;height:22px;background:#e3e3e3"></div>
<div class="t" style="left:16px;top:326px">Name</div>
<div class="t" style="left:166px;top:326px">Value</div>
<svg class="a" style="left:14px;top:348px" width="16" height="13" viewBox="0 0 16 13">
<path d="M1 2Q1 0.5 2.5 0.5H7.5L9 2H15.5V12.5H1Z" fill="#9fc5f4"/>
<path d="M2 1.5H7L8.5 3H14.5" stroke="#b9d6f8" fill="none"/>
<path d="M0 5.5H11.5L15 12.5H2.5Z" fill="#cde0fa"/>
<path d="M0.5 6L2.8 12" stroke="#fff" stroke-width="1.2"/>
<path d="M0.5 5.6H11" stroke="#f4f9ff" stroke-width="1"/>
<path d="M14 2.5H15.5V12.5H15L12.5 5.8Z" fill="#2f82e6"/>
<path d="M2.5 12H15.5" stroke="#1e74df" stroke-width="1.4"/>
</svg>
<div class="t" style="left:32px;top:348px">Attributes</div>
<div class="t" style="left:32px;top:367px"><span style="letter-spacing:-0.3px">Old SDE name</span></div>
<div class="t" style="left:166px;top:367px"><span style="letter-spacing:-0.5px">HPK<span style="letter-spacing:-2.5px">_</span>S<span style="letter-spacing:-2.5px">_</span>250-315</span></div>
<div class="t" style="left:32px;top:386px">GDL</div>
<div class="t" style="left:166px;top:386px">Centrifugal pump</div>
<div class="t" style="left:32px;top:405px">Description</div>
<div class="t" style="left:166px;top:405px"><span style="letter-spacing:-0.5px">P<span style="letter-spacing:-2.5px">_</span>CF<span style="letter-spacing:-2.5px">_</span>HPK<span style="letter-spacing:-2.5px">_</span>S<span style="letter-spacing:-2.5px">_</span>250<span style="letter-spacing:-2.5px">_</span>315</span></div>
<svg class="a" style="left:14px;top:424px" width="16" height="13" viewBox="0 0 16 13">
<path d="M1 2Q1 0.5 2.5 0.5H7.5L9 2H15.5V12.5H1Z" fill="#9fc5f4"/>
<path d="M2 1.5H7L8.5 3H14.5" stroke="#b9d6f8" fill="none"/>
<path d="M0 5.5H11.5L15 12.5H2.5Z" fill="#cde0fa"/>
<path d="M0.5 6L2.8 12" stroke="#fff" stroke-width="1.2"/>
<path d="M0.5 5.6H11" stroke="#f4f9ff" stroke-width="1"/>
<path d="M14 2.5H15.5V12.5H15L12.5 5.8Z" fill="#2f82e6"/>
<path d="M2.5 12H15.5" stroke="#1e74df" stroke-width="1.4"/>
</svg>
<div class="t" style="left:32px;top:424px"><span style="letter-spacing:-0.4px">Parameters</span></div>
<div class="t" style="left:32px;top:443px">DN1</div>
<div class="t" style="left:166px;top:443px">300.0</div>
<div class="t" style="left:32px;top:462px">DN2</div>
<div class="t" style="left:166px;top:462px">250.0</div>
<div class="t" style="left:32px;top:481px">A</div>
<div class="t" style="left:166px;top:481px">250.0</div>
<div class="t" style="left:32px;top:500px">F</div>
<div class="t" style="left:166px;top:500px">670.0</div>
<div class="t" style="left:32px;top:519px">H2</div>
<div class="t" style="left:166px;top:519px">560.0</div>
<div class="t" style="left:32px;top:538px">E1</div>
<div class="t" style="left:166px;top:538px">350.0</div>
<div class="a" style="left:504px;top:321px;width:16px;height:231px;background:#eaeaea"></div>
<svg class="a" style="left:509px;top:329px" width="8" height="5"><path d="M0 4.5L3.5 0.5L7 4.5Z" fill="url(#ag)"/></svg>
<svg class="a" style="left:509px;top:541px" width="8" height="5"><path d="M0 0.5L3.5 4.5L7 0.5Z" fill="url(#ag)"/></svg>
<div class="a thumbv" style="left:504px;top:340px;width:15px;height:28px"></div>
<div class="a" style="left:508px;top:350px;width:7px;height:1px;background:#444"></div>
<div class="a" style="left:508px;top:353px;width:7px;height:1px;background:#444"></div>
<div class="a" style="left:508px;top:356px;width:7px;height:1px;background:#444"></div>
<div class="a" style="left:522px;top:320px;width:293px;height:233px;background:#fff"></div>
<div class="a" style="left:523px;top:321px;width:291px;height:231px;border-top:2px solid #6d6d6d;border-left:2px solid #6d6d6d;border-right:1px solid #e3e3e3;border-bottom:1px solid #e3e3e3;background:#e9eef9"></div>
<svg class="a" style="left:0;top:0" width="829" height="598" viewBox="0 0 829 598">
<g fill="none" stroke="#000" stroke-width="1" shape-rendering="crispEdges">
<!-- front view -->
<rect x="586" y="351" width="22" height="2" fill="#000" stroke="none"/>
<rect x="591" y="351" width="13" height="2" fill="#f00" stroke="none"/>
<path d="M591.5 353V359M604.5 353V359"/>
<circle cx="597.5" cy="378.5" r="20.5"/>
<circle cx="597.5" cy="378.5" r="15"/>
<rect x="586.5" y="398.5" width="21" height="6" fill="#e9eef9"/>
<rect x="576.5" y="404.5" width="41" height="5" fill="#e9eef9"/>
<rect x="597" y="409" width="1" height="1" fill="#f00" stroke="none"/>
<!-- side view -->
<rect x="691" y="351" width="22" height="2" fill="#000" stroke="none"/>
<rect x="695" y="351" width="13" height="2" fill="#f00" stroke="none"/>
<path d="M695.5 353V361M707.5 353V361"/>
<rect x="694.5" y="361.5" width="14" height="34"/>
<rect x="689" y="366" width="2" height="25" fill="#000" stroke="none"/>
<rect x="689" y="371" width="2" height="15" fill="#f00" stroke="none"/>
<path d="M691 371.5H694M691 385.5H694"/>
<rect x="708.5" y="364.5" width="9" height="28"/>
<rect x="717.5" y="369.5" width="14" height="19"/>
<rect x="731.5" y="369.5" width="14" height="19"/>
<path d="M745.5 364.5L750.5 358.5H787.5L791.5 364.5V393.5L787.5 399.5H750.5L745.5 393.5Z" shape-rendering="auto"/>
<path d="M750.5 358.5V399.5M787.5 358.5V399.5" stroke-width="1.6"/>
<rect x="752.5" y="399.5" width="33" height="5"/>
<rect x="697.5" y="395.5" width="9" height="9"/>
<rect x="695.5" y="404.5" width="88" height="5" fill="#e9eef9"/>
<rect x="701" y="409" width="1" height="1" fill="#f00" stroke="none"/>
<path d="M804.5 351V410M802 351.5H807M802 409.5H807" stroke="#00f" stroke-width="1"/>
<!-- top view -->
<path d="M695.5 476.5V473.5H750.5M695.5 510.5V514.5H750.5"/>
<rect x="694.5" y="476.5" width="14" height="34"/>
<rect x="708.5" y="480.5" width="9" height="27"/>
<rect x="717.5" y="485.5" width="14" height="17"/>
<rect x="731.5" y="484.5" width="14" height="19"/>
<circle cx="702.5" cy="494" r="11" fill="#e9eef9" stroke="#000" shape-rendering="crispEdges"/>
<circle cx="702" cy="494" r="7" stroke="#f00" shape-rendering="auto"/>
<rect x="689" y="481" width="2" height="25" fill="#000" stroke="none"/>
<rect x="689" y="486" width="2" height="15" fill="#f00" stroke="none"/>
<path d="M691 486.5H694M691 500.5H694"/>
<path d="M750.5 473.5H787.5L791.5 478.5V509.5L787.5 514.5H750.5" shape-rendering="auto"/>
<path d="M750.5 473.5Q744.5 478 745.5 484V503Q744.5 509 750.5 514.5" shape-rendering="auto"/>
<path d="M750.5 473.5V514.5M787.5 473.5V514.5" stroke-width="1.6"/>
<path d="M804.5 473V515M802 473.5H807M802 514.5H807" stroke="#00f" stroke-width="1"/>
<path d="M689 527.5H792M689.5 525V531M791.5 525V531" stroke="#00f" stroke-width="1"/>
</g>
<g font-family="Liberation Sans" font-size="10" fill="#f00" stroke="#f00" stroke-width="0.12">
<text x="728.5" y="524" letter-spacing="0.45">2094</text>
<text transform="translate(800,391.5) rotate(-90)" letter-spacing="0.45">1185</text>
<text transform="translate(800,503.5) rotate(-90)" letter-spacing="0.45" fill="#00f" stroke="#00f">850</text>
</g>
<!-- iso view -->
<g fill="#e9eef9" stroke="#000" stroke-width="1" stroke-linejoin="round">
<!-- base plate -->
<path d="M550 517L579.5 534L641.5 498.5L635 494.5L600 475L558 513Z"/>
<path d="M550 517V521.5L579.5 538.5L641.5 502.5V498.5"/>
<path d="M579.5 534V538.5"/>
<!-- motor foot -->
<path d="M596.7 496.3L612 502L635 489V494L612 507L596.7 501Z"/>
<path d="M612 502V507"/>
<!-- motor body -->
<path d="M597 462.5L619 449.3Q629 447.5 636 452Q645 460 645 473Q644 482 633 488.5L612 501.6Z"/>
<!-- motor front face -->
<path d="M589 480V470L594 463.5L598 462L602 464L612 472Q618 480 618 488L617 497L612 501.6L596 499Q589 492 589 480Z"/>
<ellipse cx="600" cy="484.5" rx="9" ry="12.5" transform="rotate(-28 600 484.5)"/>
<ellipse cx="600.5" cy="485" rx="7" ry="10.5" transform="rotate(-28 600.5 485)"/>
<!-- shaft -->
<path d="M576 485L589 480.5Q596 486 597.5 497L590 500.5L580 506Z"/>
<path d="M589 480.5Q596 486 597.5 497" stroke-width="1.8"/>
<!-- pump foot -->
<path d="M560.7 517.7L572 524V528L560.7 521.7Z"/>
<path d="M572 524L578.2 520.5V524.5L572 528"/>
<!-- casing -->
<path d="M561 486.8Q555 488.5 552.8 492.5L552.4 513Q553 518 558 520.5L576 520Q583 517 587 510Q589.5 500 584 492Q580.5 487.5 576.8 486Z"/>
<path d="M564 491Q574 497 576 507Q576.5 514 575 520" fill="none"/>
<path d="M567.5 489.5Q578 496 580.5 506Q581 514 580 519.5" fill="none"/>
<ellipse cx="561.5" cy="507.5" rx="8" ry="11.8" transform="rotate(-22 561.5 507.5)"/>
<path d="M566 497.5Q570.5 503 569.5 512Q568 517 564 519" fill="none" stroke-width="2"/>
<path d="M556.5 500L559 499.5L563 502L565.5 506L565.5 512.5L563 515L559.5 514L556 510L555.5 504Z" stroke="#f00"/>
<!-- top flange -->
<path d="M563.5 485V491Q569.5 494 575.5 491V485"/>
<ellipse cx="568.8" cy="480.3" rx="10.6" ry="5.4"/>
<path d="M559.5 483.5Q568.8 489 578 483.5" fill="none" stroke-width="2"/>
<ellipse cx="569.5" cy="480" rx="6.2" ry="3.6" stroke="#f00"/>
</g>
</svg>
<!-- bottom -->
<div class="t" style="left:13px;top:560px">136 objects</div>
<div class="btn" style="left:544px;top:561px;width:83px;height:22px">OK</div>
<div class="btn" style="left:635px;top:561px;width:83px;height:22px">Cancel</div>
<div class="btn" style="left:726px;top:561px;width:83px;height:22px">Help</div>
</body></html>
